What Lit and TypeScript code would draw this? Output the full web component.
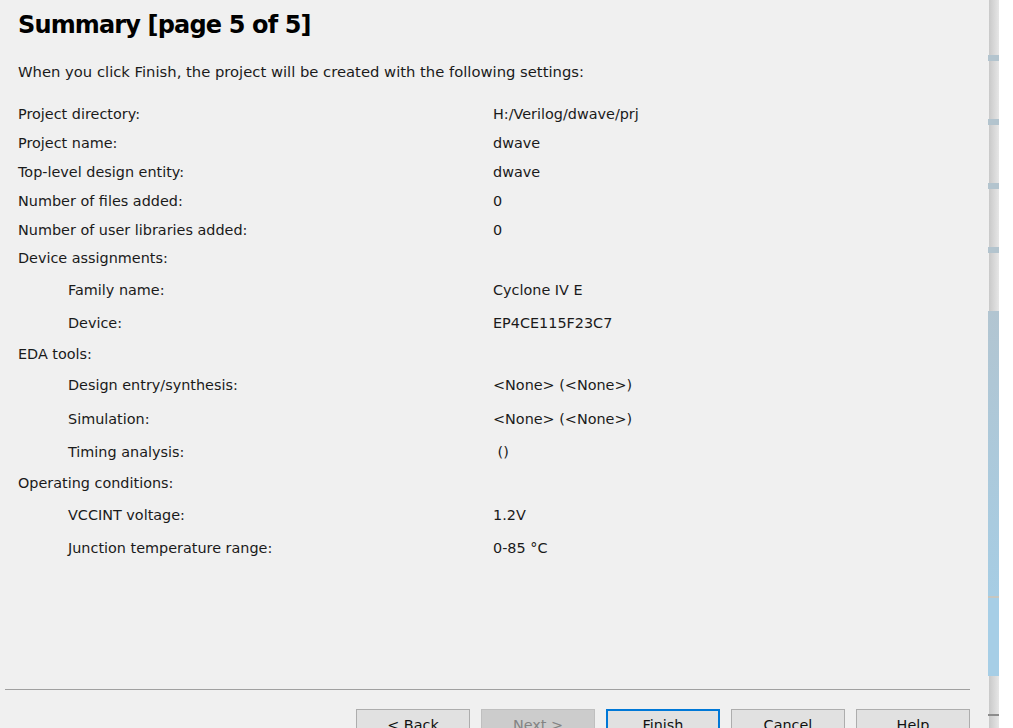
import { LitElement, html, css } from "lit";
import { customElement } from "lit/decorators.js";

type Row = [string, string, string?];
const rows: Row[] = [
  ["Project directory:", "H:/Verilog/dwave/prj"],
  ["Project name:", "dwave"],
  ["Top-level design entity:", "dwave"],
  ["Number of files added:", "0"],
  ["Number of user libraries added:", "0"],
  ["Device assignments:", ""],
  ["Family name:", "Cyclone IV E", "sub"],
  ["Device:", "EP4CE115F23C7", "sub"],
  ["EDA tools:", ""],
  ["Design entry/synthesis:", "<None> (<None>)", "sub"],
  ["Simulation:", "<None> (<None>)", "sub"],
  ["Timing analysis:", " ()", "sub"],
  ["Operating conditions:", ""],
  ["VCCINT voltage:", "1.2V", "sub"],
  ["Junction temperature range:", "0-85 °C", "sub"],
];

@customElement("app-root")
export class AppRoot extends LitElement {
  static styles = css`
    :host {
      display: block;
      width: 1013px;
      height: 728px;
      overflow: hidden;
      background: #fff;
      font-family: "DejaVu Sans", sans-serif;
      color: #1a1a1a;
    }
    .window { display: flex; height: 728px; }
    .page {
      width: 989px;
      flex: none;
      height: 728px;
      background: #f0f0f0;
      box-sizing: border-box;
      padding: 0 19px 0 5px;
      display: flex;
      flex-direction: column;
    }
    h1 {
      margin: 10px 0 0 13px;
      font-size: 24px;
      line-height: 30px;
      font-weight: 700;
      color: #000;
      letter-spacing: -0.85px;
    }
    .intro {
      margin: 21px 0 0 13px;
      font-size: 14.78px;
      line-height: 22px;
    }
    .rows {
      margin: 17px 0 0 13px;
      font-size: 14.4px;
    }
    .row {
      display: grid;
      grid-template-columns: 475px 1fr;
      height: 28.8px;
      align-items: center;
    }
    .row.sub { height: 33.5px; }
    .row.sub .label { padding-left: 50px; }
    .value { white-space: pre; }
    .spacer { flex: 1; }
    .rule { height: 1px; background: #a0a0a0; margin-bottom: 19px; }
    .buttons {
      display: flex;
      justify-content: flex-end;
      gap: 11px;
      height: 19px;
    }
    .btn {
      width: 114px;
      height: 26px;
      flex: none;
      box-sizing: border-box;
      border: 1px solid #adadad;
      background: #e1e1e1;
      font-size: 14.4px;
      text-align: center;
      line-height: 31px;
      color: #111;
    }
    .btn.off { background: #ccc; border-color: #bfbfbf; color: #838383; }
    .btn.primary { border: 2px solid #0078d7; line-height: 29px; }
    .strip {
      width: 10px;
      flex: none;
      height: 728px;
      display: flex;
      flex-direction: column;
    }
    .track {
      background: linear-gradient(90deg, #c9c9c9, #e6e6e6);
    }
    .tick { height: 6px; background: #b3c4ce; margin-left: -1px; flex: none; }
    .t1 { height: 55px; flex: none; }
    .t2 { height: 58px; flex: none; }
    .blue {
      height: 285px;
      flex: none;
      background: linear-gradient(180deg, #b2c5d1, #a6cde4);
      margin-left: -1px;
    }
    .line { height: 2px; flex: none; background: #c6c6c0; margin-left: -1px; }
    .blue2 { height: 78px; flex: none; background: #a6cee6; margin-left: -1px; }
    .bottom { height: 38px; flex: none; }
    .bottom2 { height: 2px; flex: none; background: #8c8c8c; margin-left: -1px; }
    .bottom3 { flex: 1; }
    .rest { flex: 1; background: #fff; }
  `;

  render() {
    return html`
      <div class="window">
        <div class="page">
          <h1>Summary [page 5 of 5]</h1>
          <div class="intro">When you click Finish, the project will be created with the following settings:</div>
          <div class="rows">
            ${rows.map(
              ([l, v, c]) => html`<div class="row ${c ?? ""}">
                <div class="label">${l}</div>
                <div class="value">${v}</div>
              </div>`
            )}
          </div>
          <div class="spacer"></div>
          <div class="rule"></div>
          <div class="buttons">
            <div class="btn">&lt; Back</div>
            <div class="btn off">Next &gt;</div>
            <div class="btn primary">Finish</div>
            <div class="btn">Cancel</div>
            <div class="btn">Help</div>
          </div>
        </div>
        <div class="strip">
          <div class="track t1"></div><div class="tick"></div>
          <div class="track t2"></div><div class="tick"></div>
          <div class="track t2"></div><div class="tick"></div>
          <div class="track t2"></div><div class="tick"></div>
          <div class="track t2"></div>
          <div class="blue"></div><div class="line"></div><div class="blue2"></div>
          <div class="bottom track"></div><div class="bottom2"></div><div class="bottom3 track"></div>
        </div>
        <div class="rest"></div>
      </div>
    `;
  }
}
